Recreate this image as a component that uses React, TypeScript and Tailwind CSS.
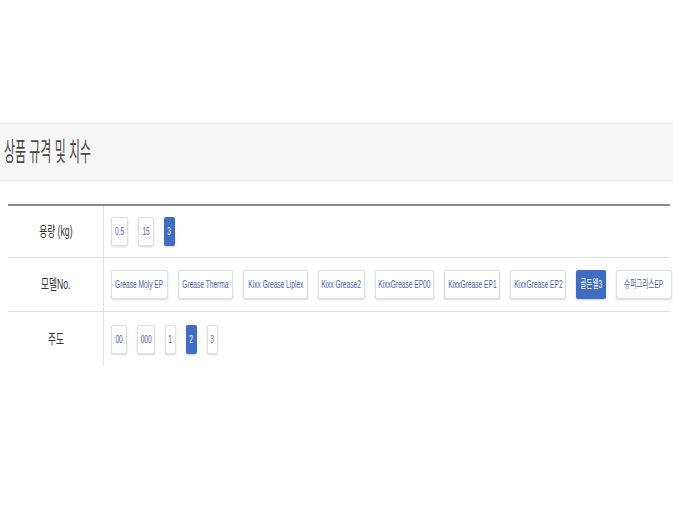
const ROWS = [
  {
    label: "용량 (kg)",
    options: [
      { text: "0.5", w: "w-[17px]" },
      { text: "15", w: "w-[16px]" },
      { text: "3", w: "w-[11px]", active: true },
    ],
  },
  {
    label: "모델No.",
    options: [
      { text: "Grease Moly EP", w: "w-[57px]" },
      { text: "Grease Therma", w: "w-[55px]" },
      { text: "Kixx Grease Liplex", w: "w-[65px]" },
      { text: "Kixx Grease2", w: "w-[47px]" },
      { text: "KixxGrease EP00", w: "w-[59px]" },
      { text: "KixxGrease EP1", w: "w-[56px]" },
      { text: "KixxGrease EP2", w: "w-[56px]" },
      { text: "골든웰3", w: "w-[30px]", active: true },
      { text: "슈퍼그리스EP", w: "w-[56px]" },
    ],
  },
  {
    label: "주도",
    options: [
      { text: "00", w: "w-[16px]" },
      { text: "000", w: "w-[18px]" },
      { text: "1", w: "w-[11px]" },
      { text: "2", w: "w-[11px]", active: true },
      { text: "3", w: "w-[11px]" },
    ],
  },
];

export default function App() {
  return (
    <div className="min-h-[517px] w-full overflow-hidden bg-white pt-[123px] font-['Liberation_Sans','Noto_Sans_CJK_KR',sans-serif]">
      {/* 제목 */}
      <div className="flex h-[58px] items-center border-y border-[#e6e6e6] bg-[#f7f7f7] pl-[4px]">
        <span className="inline-block origin-left scale-x-[0.46] whitespace-nowrap text-[26px] text-[#4a4a4a]">
          상품 규격 및 치수
        </span>
      </div>

      {/* 옵션 표 */}
      <div className="ml-[8px] mt-[23px] w-[662px] border-t-2 border-[#8a8a8a]">
        {ROWS.map((row, i) => (
          <div
            key={row.label}
            className={`flex ${i === 0 ? "h-[52px]" : "h-[54px]"} ${
              i < ROWS.length - 1 ? "border-b border-[#e2e2e2]" : ""
            }`}
          >
            <div className="flex w-[96px] shrink-0 items-center justify-center border-r border-[#e2e2e2]">
              <span className="inline-block scale-x-[0.62] whitespace-nowrap text-[14px] text-[#333]">
                {row.label}
              </span>
            </div>
            <div className="flex items-center gap-[10px] pl-[7px]">
              {row.options.map((o) => (
                <button
                  key={o.text}
                  className={`flex h-[29px] shrink-0 items-center justify-center overflow-visible rounded-[2px] ${o.w} ${
                    o.active
                      ? "bg-[#3f6dc6] text-white shadow-[0_1px_2px_rgba(0,0,0,0.2)]"
                      : "border border-[#e0e0e0] bg-white text-[#4b62a8] shadow-[0_1px_2px_rgba(0,0,0,0.15)]"
                  }`}
                >
                  <span className="inline-block scale-x-[0.6] whitespace-nowrap text-[11px]">
                    {o.text}
                  </span>
                </button>
              ))}
            </div>
          </div>
        ))}
      </div>
    </div>
  );
}
